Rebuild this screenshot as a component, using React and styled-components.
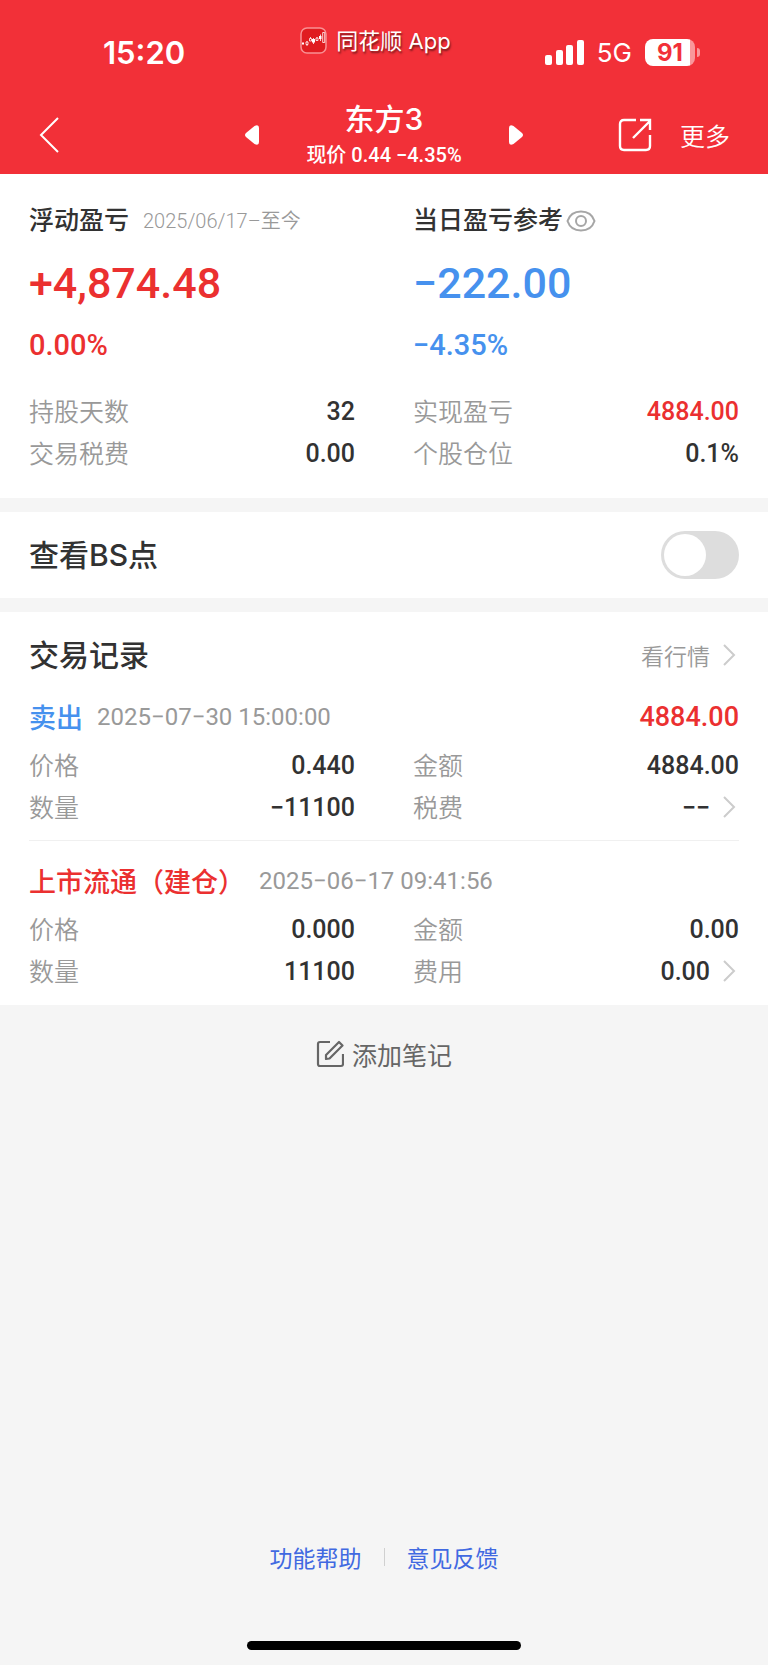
import React, { useState } from 'react'
import styled, { ThemeProvider, createGlobalStyle } from 'styled-components'

const theme = {
  colors: {
    header: '#f23038',
    page: '#f5f5f5',
    white: '#ffffff',
    text: '#323232',
    label: '#999999',
    note: '#666666',
    up: '#eb3030',
    down: '#4691ee',
    link: '#4169e1',
    line: '#f0f0f0',
    chevron: '#cccccc',
    toggle: '#dddddd',
  },
  fonts: {
    base: `Roboto, 'Noto Sans CJK SC', sans-serif`,
    system: `Inter, 'Noto Sans CJK SC', sans-serif`,
  },
}

const summary = [
  { label: '持股天数', value: '32' },
  { label: '实现盈亏', value: '4884.00', tone: 'up' },
  { label: '交易税费', value: '0.00' },
  { label: '个股仓位', value: '0.1%' },
]

const records = [
  {
    type: '卖出',
    tone: 'down',
    time: '2025−07−30 15:00:00',
    profit: '4884.00',
    fields: [
      { label: '价格', value: '0.440' },
      { label: '金额', value: '4884.00' },
      { label: '数量', value: '−11100' },
      { label: '税费', value: '−−', more: true },
    ],
  },
  {
    type: '上市流通（建仓）',
    tone: 'up',
    time: '2025−06−17 09:41:56',
    fields: [
      { label: '价格', value: '0.000' },
      { label: '金额', value: '0.00' },
      { label: '数量', value: '11100' },
      { label: '费用', value: '0.00', more: true },
    ],
  },
]

export default function App() {
  const [showPoints, setShowPoints] = useState(false)

  return (
    <ThemeProvider theme={theme}>
      <GlobalStyle />
      <Page>
        <Header>
          <StatusBar />
          <NavBar />
        </Header>
        <Main>
          <Section>
            <Columns>
              <div>
                <SummaryTitle>
                  浮动盈亏 <Period>2025/06/17–至今</Period>
                </SummaryTitle>
                <Amount $tone="up">+4,874.48</Amount>
                <Percent $tone="up">0.00%</Percent>
              </div>
              <div>
                <SummaryTitle>
                  当日盈亏参考
                  <IconButton aria-label="隐藏金额">
                    <EyeIcon />
                  </IconButton>
                </SummaryTitle>
                <Amount $tone="down">−222.00</Amount>
                <Percent $tone="down">−4.35%</Percent>
              </div>
            </Columns>
            <SummaryFields>
              <Fields items={summary} />
            </SummaryFields>
          </Section>

          <ToggleSection>
            <Title as="label" htmlFor="bs-points">
              查看BS点
            </Title>
            <Toggle
              id="bs-points"
              type="checkbox"
              role="switch"
              checked={showPoints}
              onChange={e => setShowPoints(e.target.checked)}
            />
          </ToggleSection>

          <TradeSection>
            <TradeHeading>
              <Title>交易记录</Title>
              <QuoteLink href="#quote">
                看行情
                <Chevron />
              </QuoteLink>
            </TradeHeading>
            {records.map(record => (
              <Record key={record.time}>
                <RecordHeading>
                  <RecordType $tone={record.tone}>{record.type}</RecordType>
                  <Time>{record.time}</Time>
                  {record.profit && <Profit>{record.profit}</Profit>}
                </RecordHeading>
                <Fields items={record.fields} />
              </Record>
            ))}
          </TradeSection>

          <NoteButton>
            <NoteIcon />
            添加笔记
          </NoteButton>
        </Main>
        <Footer>
          <FooterLinks>
            <a href="#help">功能帮助</a>
            <Separator />
            <a href="#feedback">意见反馈</a>
          </FooterLinks>
          <HomeIndicator />
        </Footer>
      </Page>
    </ThemeProvider>
  )
}

function StatusBar() {
  return (
    <StatusRow>
      <Clock>15:20</Clock>
      <AppTag>
        <AppLogo />
        同花顺 App
      </AppTag>
      <Signals>
        <SignalIcon />
        5G
        <Battery>
          <BatteryLevel>91</BatteryLevel>
          <BatteryTip />
        </Battery>
      </Signals>
    </StatusRow>
  )
}

function NavBar() {
  return (
    <NavRow>
      <NavSide>
        <IconButton aria-label="返回">
          <svg width="22" height="38" viewBox="0 0 22 38" fill="none">
            <path d="M20 2 3 19l17 17" stroke="#fff" strokeWidth="2" />
          </svg>
        </IconButton>
      </NavSide>
      <StockSwitcher>
        <IconButton aria-label="上一只">
          <svg width="14" height="20" viewBox="0 0 14 20" fill="#fff">
            <path d="M9.500 1 1 8Q-1 10 1 12L9.500 19Q14 21 14 17V3Q14-1 9.500 1Z" />
          </svg>
        </IconButton>
        <Stock>
          <StockName>东方3</StockName>
          <StockPrice>现价 0.44 −4.35%</StockPrice>
        </Stock>
        <IconButton aria-label="下一只">
          <svg width="14" height="20" viewBox="0 0 14 20" fill="#fff">
            <path d="M4.500 1 13 8Q15 10 13 12L4.500 19Q0 21 0 17V3Q0-1 4.500 1Z" />
          </svg>
        </IconButton>
      </StockSwitcher>
      <NavSide $end>
        <IconButton aria-label="分享">
          <svg width="34" height="34" viewBox="0 0 34 34" fill="none" stroke="#fff" strokeWidth="2.400">
            <path d="M18 2H6Q2 2 2 6v22q0 4 4 4h22q4 0 4-4V17M15 20 32 3M22 2h10v10" />
          </svg>
        </IconButton>
        <MoreButton>更多</MoreButton>
      </NavSide>
    </NavRow>
  )
}

function Fields({ items }) {
  return (
    <FieldGrid>
      {items.map(({ label, value, tone, more }) => (
        <Field key={label}>
          <Label>{label}</Label>
          <Value $tone={tone}>
            {value}
            {more && <Chevron />}
          </Value>
        </Field>
      ))}
    </FieldGrid>
  )
}

function Chevron() {
  return (
    <ChevronSvg viewBox="0 0 14 24" fill="none">
      <path d="m2 2 10 10L2 22" stroke="currentColor" strokeWidth="2" />
    </ChevronSvg>
  )
}

function AppLogo() {
  return (
    <svg width="28" height="28" viewBox="0 0 28 28" fill="none">
      <rect x="1" y="1" width="25" height="25" rx="6" fill="#e01c20" stroke="#f99093" strokeWidth="1.500" />
      <path d="M2 15.500h2v2H2zM12 12h3v3.500h-3zM19 9h2.500v3H19z" fill="#fff" />
      <path
        d="M6 15h2v2.500H6zM9.500 11.500h2V14h-2zM16 11h2v2.500h-2zM22.700 5.500h2v10h-2zM7 14v1M7 17.500V19M10.500 10v1.500M13.500 11v6M17 10v1M20.500 7.500V14"
        stroke="#fff"
        strokeWidth=".8"
      />
    </svg>
  )
}

function SignalIcon() {
  return (
    <svg width="39" height="25" viewBox="0 0 39 25" fill="#fff">
      <rect y="15" width="7" height="10" rx="2" />
      <rect x="11" y="10" width="7" height="15" rx="2" />
      <rect x="21" y="5" width="7" height="20" rx="2" />
      <rect x="32" width="7" height="25" rx="2" />
    </svg>
  )
}

function EyeIcon() {
  return (
    <svg width="30" height="22" viewBox="0 0 30 22" fill="none" stroke="#a6a6a6" strokeWidth="2">
      <path d="M1.500 11C3.500 5 8.500 1.500 15 1.500S26.500 5 28.500 11C26.500 17 21.500 20.500 15 20.500S3.500 17 1.500 11Z" />
      <circle cx="15" cy="11" r="5" />
    </svg>
  )
}

function NoteIcon() {
  return (
    <svg width="28" height="28" viewBox="0 0 28 28" fill="none" stroke="#666" strokeWidth="2.200">
      <path d="M14 2H4Q2 2 2 4v20q0 2 2 2h21q2 0 2-2V14" />
      <path d="M10 19v-4L23 2 26.500 5.500 13.500 18.500Z" strokeLinejoin="round" />
    </svg>
  )
}

const GlobalStyle = createGlobalStyle`
  * {
    box-sizing: border-box;
  }

  body {
    margin: 0;
    background: ${theme.colors.page};
    color: ${theme.colors.text};
    font-family: ${theme.fonts.base};
  }

  button {
    padding: 0;
    border: 0;
    background: none;
    color: inherit;
    font: inherit;
    cursor: pointer;
  }

  a {
    color: inherit;
    text-decoration: none;
  }

  h1, h2, p, dl, dd {
    margin: 0;
  }

  svg {
    display: block;
    flex: none;
  }
`

const Page = styled.div`
  display: flex;
  flex-direction: column;
  min-height: 100vh;
`

const Header = styled.header`
  background: ${({ theme }) => theme.colors.header};
  color: ${({ theme }) => theme.colors.white};
`

const StatusRow = styled.div`
  display: grid;
  grid-template-columns: 1fr auto 1fr;
  padding: 27px 68px 0 51px;
  height: 96px;
  font-family: ${({ theme }) => theme.fonts.system};
`

const Clock = styled.div`
  padding: 8px 0 0 52px;
  font-size: 31px;
  font-weight: 600;
  line-height: 36px;
`

const AppTag = styled.div`
  display: flex;
  align-items: center;
  gap: 8px;
  height: 28px;
  font-size: 22px;
  line-height: 26px;
  text-shadow: 1px 2px 2px rgba(0, 0, 0, 0.5);
`

const Signals = styled.div`
  display: flex;
  justify-content: flex-end;
  align-items: center;
  gap: 13px;
  height: 50px;
  font-size: 26px;
`

const Battery = styled.div`
  display: flex;
  align-items: center;
  gap: 2px;
`

const BatteryLevel = styled.div`
  width: 50px;
  border-radius: 8px;
  background: linear-gradient(to right, #fff 90%, #f9979b 90%);
  color: ${({ theme }) => theme.colors.header};
  font-size: 24px;
  font-weight: 700;
  line-height: 27px;
  text-align: center;
`

const BatteryTip = styled.div`
  width: 3px;
  height: 9px;
  border-radius: 0 3px 3px 0;
  background: #f9979b;
`

const NavRow = styled.nav`
  display: grid;
  grid-template-columns: 1fr auto 1fr;
  align-items: center;
  height: 78px;
  padding: 0 38px;
`

const NavSide = styled.div`
  display: flex;
  align-items: center;
  justify-content: ${({ $end }) => ($end ? 'flex-end' : 'flex-start')};
  gap: 28px;
`

const IconButton = styled.button`
  display: flex;
`

const MoreButton = styled.button`
  font-size: 25px;
  font-weight: 350;
`

const StockSwitcher = styled.div`
  display: flex;
  align-items: center;
  justify-content: space-between;
  width: 278px;
`

const Stock = styled.div`
  text-align: center;
`

const StockName = styled.h1`
  font-family: ${({ theme }) => theme.fonts.system};
  font-size: 30px;
  font-weight: 500;
  line-height: 40px;
`

const StockPrice = styled.p`
  font-size: 20px;
  font-weight: 500;
  line-height: 32px;
`

const Main = styled.main`
  display: flex;
  flex: 1;
  flex-direction: column;
  gap: 14px;
`

const Section = styled.section`
  padding: 27px 29px 24px;
  background: ${({ theme }) => theme.colors.white};
`

const Columns = styled.div`
  display: grid;
  grid-template-columns: 1fr 1fr;
  column-gap: 58px;
`

const SummaryTitle = styled.h2`
  display: flex;
  align-items: center;
  gap: 3px;
  font-size: 25px;
  font-weight: 500;
  line-height: 40px;
`

const Period = styled.span`
  padding-left: 11px;
  color: ${({ theme }) => theme.colors.label};
  font-size: 20px;
  font-weight: 350;
`

const Amount = styled.p`
  margin-top: 12px;
  color: ${({ theme, $tone }) => theme.colors[$tone]};
  font-size: 43px;
  font-weight: 500;
  line-height: 60px;
`

const Percent = styled.p`
  margin-top: 14px;
  color: ${({ theme, $tone }) => theme.colors[$tone]};
  font-size: 29px;
  font-weight: 500;
  line-height: 36px;
`

const SummaryFields = styled.div`
  margin-top: 27px;
`

const FieldGrid = styled.dl`
  display: grid;
  grid-template-columns: 1fr 1fr;
  column-gap: 58px;
`

const Field = styled.div`
  display: flex;
  align-items: center;
  justify-content: space-between;
  height: 42px;
`

const Label = styled.dt`
  padding-bottom: 3px;
  color: ${({ theme }) => theme.colors.label};
  font-size: 25px;
  font-weight: 350;
`

const Value = styled.dd`
  display: flex;
  align-items: center;
  gap: 12px;
  color: ${({ theme, $tone }) => theme.colors[$tone || 'text']};
  font-size: 25px;
  font-weight: 500;
`

const ChevronSvg = styled.svg`
  width: 14px;
  height: 24px;
  margin-right: 3px;
  color: ${({ theme }) => theme.colors.chevron};
`

const Title = styled.h2`
  font-family: ${({ theme }) => theme.fonts.system};
  font-size: 30px;
  font-weight: 500;
  line-height: 44px;
`

const ToggleSection = styled(Section)`
  display: flex;
  align-items: center;
  justify-content: space-between;
  padding-top: 19px;
  padding-bottom: 19px;
`

const Toggle = styled.input`
  appearance: none;
  width: 78px;
  height: 48px;
  margin: 0;
  padding: 3px;
  border-radius: 24px;
  background: ${({ theme }) => theme.colors.toggle};
  cursor: pointer;

  &::before {
    content: '';
    display: block;
    width: 42px;
    height: 42px;
    border-radius: 50%;
    background: ${({ theme }) => theme.colors.white};
  }

  &:checked {
    background: ${({ theme }) => theme.colors.up};
  }

  &:checked::before {
    margin-left: auto;
  }
`

const TradeSection = styled(Section)`
  padding-top: 21px;
  padding-bottom: 1px;
`

const TradeHeading = styled.div`
  display: flex;
  align-items: center;
  justify-content: space-between;
`

const QuoteLink = styled.a`
  display: flex;
  align-items: center;
  gap: 12px;
  color: ${({ theme }) => theme.colors.label};
  font-size: 23px;
  font-weight: 350;
`

const Record = styled.article`
  padding: 13px 0 12px;

  & + & {
    border-top: 1px solid ${({ theme }) => theme.colors.line};
  }
`

const RecordHeading = styled.div`
  display: flex;
  align-items: center;
  gap: 14px;
  height: 54px;
`

const RecordType = styled.span`
  padding-bottom: 2px;
  color: ${({ theme, $tone }) => theme.colors[$tone]};
  font-size: 27px;
  font-weight: 500;
`

const Time = styled.time`
  color: ${({ theme }) => theme.colors.label};
  font-size: 24px;
  font-weight: 400;
`

const Profit = styled.span`
  margin-left: auto;
  color: ${({ theme }) => theme.colors.up};
  font-size: 27px;
  font-weight: 500;
`

const NoteButton = styled.button`
  display: flex;
  align-items: center;
  align-self: center;
  gap: 8px;
  height: 70px;
  color: ${({ theme }) => theme.colors.note};
  font-size: 25px;
`

const Footer = styled.footer`
  display: flex;
  flex-direction: column;
  align-items: center;
  padding-bottom: 15px;
`

const FooterLinks = styled.div`
  display: flex;
  align-items: center;
  gap: 22px;
  height: 36px;
  margin-bottom: 66px;
  color: ${({ theme }) => theme.colors.link};
  font-size: 23px;
`

const Separator = styled.span`
  width: 1px;
  height: 18px;
  background: #d0d0d0;
`

const HomeIndicator = styled.div`
  width: 274px;
  height: 9px;
  border-radius: 5px;
  background: #000;
`
